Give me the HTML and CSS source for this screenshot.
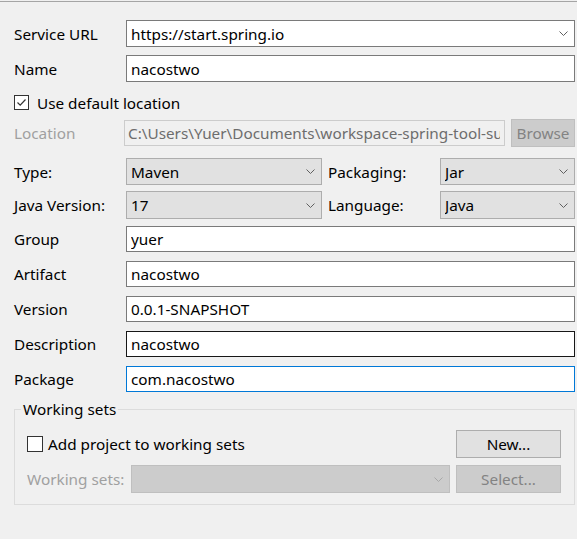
FILE: index.html
```html
<!DOCTYPE html>
<html lang="en">
<head>
    <meta charset="UTF-8">
    <title>New Spring Starter Project</title>
    <link rel="stylesheet" href="styles.css">
</head>
<body>

<div class="window">
    <div class="form">

        <!-- Service URL -->
        <div class="row row-url">
            <label>Service URL</label>
            <div class="combo editable">
                <span>https://start.spring.io</span>
                <svg class="chev" width="9" height="5" viewBox="0 0 9 5"><path d="M0.5 0.5 L4.5 4.5 L8.5 0.5"/></svg>
            </div>
        </div>

        <div class="row row-name">
            <label>Name</label>
            <input type="text" class="field" value="nacostwo">
        </div>

        <div class="row row-check">
            <span class="check checked">
                <svg width="13" height="13" viewBox="0 0 13 13"><path d="M2.5 6.5 L5.2 9.2 L10.5 3.5"/></svg>
            </span>
            <span>Use default location</span>
        </div>

        <div class="row row-location">
            <label class="disabled">Location</label>
            <input type="text" class="field field-disabled" value="C:\Users\Yuer\Documents\workspace-spring-tool-suite-4" disabled>
            <button class="btn btn-disabled">Browse</button>
        </div>

        <!-- Build options -->
        <div class="row row-opts row-type">
            <label>Type:</label>
            <div class="combo">
                <span>Maven</span>
                <svg class="chev" width="9" height="5" viewBox="0 0 9 5"><path d="M0.5 0.5 L4.5 4.5 L8.5 0.5"/></svg>
            </div>
            <label class="opt-label">Packaging:</label>
            <div class="combo">
                <span>Jar</span>
                <svg class="chev" width="9" height="5" viewBox="0 0 9 5"><path d="M0.5 0.5 L4.5 4.5 L8.5 0.5"/></svg>
            </div>
        </div>

        <div class="row row-opts row-java">
            <label>Java Version:</label>
            <div class="combo">
                <span>17</span>
                <svg class="chev" width="9" height="5" viewBox="0 0 9 5"><path d="M0.5 0.5 L4.5 4.5 L8.5 0.5"/></svg>
            </div>
            <label class="opt-label">Language:</label>
            <div class="combo">
                <span>Java</span>
                <svg class="chev" width="9" height="5" viewBox="0 0 9 5"><path d="M0.5 0.5 L4.5 4.5 L8.5 0.5"/></svg>
            </div>
        </div>

        <!-- Project coordinates -->
        <div class="row row-first">
            <label>Group</label>
            <input type="text" class="field" value="yuer">
        </div>
        <div class="row row-next">
            <label>Artifact</label>
            <input type="text" class="field" value="nacostwo">
        </div>
        <div class="row row-next">
            <label>Version</label>
            <input type="text" class="field" value="0.0.1-SNAPSHOT">
        </div>
        <div class="row row-next">
            <label>Description</label>
            <input type="text" class="field hover" value="nacostwo">
        </div>
        <div class="row row-next">
            <label>Package</label>
            <input type="text" class="field focus" value="com.nacostwo">
        </div>

        <!-- Working sets -->
        <fieldset class="group">
            <legend>Working sets</legend>
            <div class="ws-row">
                <div class="ws-check">
                    <span class="check"></span>
                    <span>Add project to working sets</span>
                </div>
                <button class="btn">New...</button>
            </div>
            <div class="ws-row ws-sets">
                <label class="disabled">Working sets:</label>
                <div class="combo combo-disabled">
                    <span></span>
                    <svg class="chev" width="9" height="5" viewBox="0 0 9 5"><path d="M0.5 0.5 L4.5 4.5 L8.5 0.5"/></svg>
                </div>
                <button class="btn btn-disabled">Select...</button>
            </div>
        </fieldset>

    </div>
</div>

</body>
</html>
```

FILE: styles.css
```css
body {
    margin: 0;
    background-color: #f0f0f0;
    font-family: "Noto Sans", "Open Sans", sans-serif;
    font-size: 15.3px;
    color: #000;
}
.window {
    margin-top: 1px;
    border-top: 1px solid #a5a5a5;
    height: 537px;
}
.form {
    padding: 18px 2px 0 14px;
}
.row {
    display: grid;
    grid-template-columns: 112px 1fr;
    align-items: center;
    height: 27px;
}
.row label {
    white-space: nowrap;
}
.row-name {
    margin-top: 8px;
}
.row-check {
    display: flex;
    gap: 8px;
    margin-top: 7px;
}
.row-location {
    grid-template-columns: 110px 387px 1fr;
    margin-top: 3px;
    height: 28px;
}
.row-location .field {
    height: 26px;
    width: 381px;
}
.row-opts {
    grid-template-columns: 112px 196px 118px 1fr;
}
.row-type {
    margin-top: 11px;
}
.row-java {
    margin-top: 6px;
    height: 28px;
}
.opt-label {
    padding-left: 6px;
}
.row-first {
    margin-top: 7px;
    height: 26px;
}
.row-next {
    margin-top: 9px;
    height: 26px;
}

/* inputs */
.field {
    box-sizing: border-box;
    height: 100%;
    width: 100%;
    margin: 0;
    padding: 0 4px;
    border: 1px solid #7a7a7a;
    background: #fff;
    font: inherit;
    color: #000;
    outline: none;
}
.field.hover {
    border-color: #171717;
}
.field.focus {
    border-color: #0078d7;
}
.field-disabled {
    background: #f0f0f0;
    border-color: #cccccc;
    color: #6d6d6d;
    padding-left: 3px;
}
.disabled {
    color: #a0a0a0;
}

.combo {
    box-sizing: border-box;
    height: 100%;
    display: flex;
    align-items: center;
    padding: 0 6px 0 4px;
    background: #e1e1e1;
    border: 1px solid #adadad;
}
.combo span {
    flex: 1;
    white-space: nowrap;
    overflow: hidden;
}
.combo.editable {
    background: #fff;
    border-color: #7a7a7a;
}
.combo-disabled {
    background: #cccccc;
    border-color: #bfbfbf;
}
.chev {
    flex: none;
}
.chev path {
    fill: none;
    stroke: #606060;
    stroke-width: 1;
}
.combo-disabled .chev path {
    stroke: #a8a8a8;
}

.check {
    box-sizing: border-box;
    width: 15px;
    height: 15px;
    border: 1px solid #333;
    background: #fff;
    display: inline-flex;
    align-items: center;
    justify-content: center;
    flex: none;
}
.check svg path {
    fill: none;
    stroke: #333;
    stroke-width: 1.2;
}

.btn {
    box-sizing: border-box;
    height: 100%;
    width: 100%;
    margin: 0;
    padding: 0;
    border: 1px solid #adadad;
    background: #e1e1e1;
    font: inherit;
    color: #000;
}
.btn-disabled {
    background: #cccccc;
    border-color: #bfbfbf;
    color: #838383;
}

/* working sets group */
.group {
    margin: 7px 0 0 0;
    padding: 11px 13px 11px 12px;
    border: 1px solid #dcdcdc;
    min-width: 0;
}
.group legend {
    margin-left: -6px;
    padding: 0 2px;
    line-height: 20px;
}
.ws-row {
    display: grid;
    grid-template-columns: 1fr 105px;
    align-items: center;
    height: 28px;
}
.ws-check {
    display: flex;
    align-items: center;
    gap: 5px;
}
.ws-check .check {
    width: 16px;
    height: 16px;
}
.ws-sets {
    grid-template-columns: 104px 325px 1fr;
    margin-top: 7px;
}
.ws-sets .combo {
    width: 319px;
}
```
